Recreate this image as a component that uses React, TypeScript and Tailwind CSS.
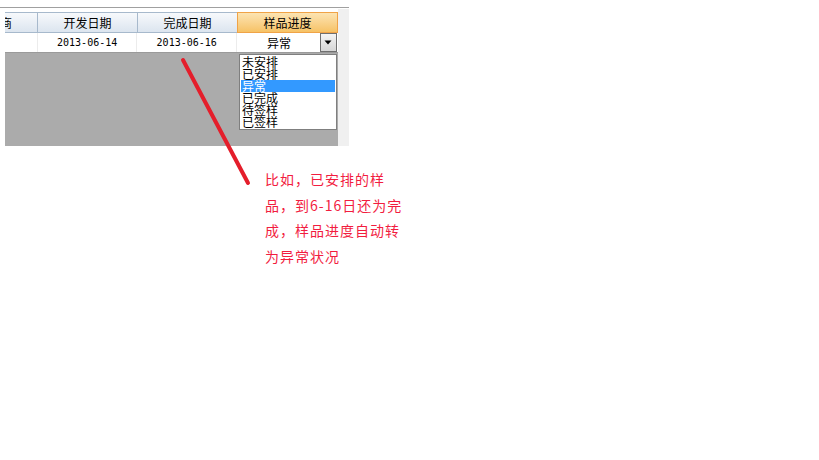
import React from "react";

const cjk = "font-['Noto_Sans_CJK_SC',sans-serif]";
const mono = "font-['DejaVu_Sans_Mono','Noto_Sans_CJK_SC',monospace]";

const options = ["未安排", "已安排", "异常", "已完成", "待签样", "已签样"];

function HeaderCell({ label, className = "" }: { label: string; className?: string }) {
  return (
    <div
      className={`flex items-center justify-center text-[12px] text-black bg-gradient-to-b from-[#f7f9fc] to-[#dce5ef] ${className}`}
    >
      {label}
    </div>
  );
}

function StatusSelect() {
  return (
    <div className="flex items-center w-[101px] h-full">
      <span className="flex-1 text-center text-[12px] text-black pl-[1px]">异常</span>
      <div className="w-[17px] h-[19px] mr-[1px] border border-[#6f6f6f] bg-gradient-to-b from-[#f4f4f4] to-[#d6d6d6] flex items-center justify-center">
        <svg width="8" height="5" viewBox="0 0 8 5">
          <path d="M0.5 0.5 L7.5 0.5 L4 4.5 Z" fill="#000" />
        </svg>
      </div>
    </div>
  );
}

function OptionList() {
  return (
    <div className="absolute left-[234px] top-[1px] w-[98px] h-[76px] bg-white border border-[#7f7f7f] pt-[1px] px-px">
      {options.map((opt) => (
        <div
          key={opt}
          className={`h-[12px] leading-[12px] text-[12px] pl-[1px] ${
            opt === "异常" ? "bg-[#3399ff] text-white" : "text-black"
          }`}
        >
          {opt}
        </div>
      ))}
    </div>
  );
}

export default function App() {
  return (
    <div className={`relative w-[819px] h-[460px] bg-white overflow-hidden ${cjk}`}>
      <div className="pt-[7px]">
        <div className="w-[349px] h-px bg-[#a0a0a0]" />
        <div className="flex w-[349px] h-[138px]">
          <div className="w-[5px]" />
          <div className="w-[333px] flex flex-col pt-[4px]">
            {/* header */}
            <div className="flex h-[21px] border-t border-b border-[#a7b9cc]">
              <div className="w-[32px] overflow-hidden flex items-center bg-gradient-to-b from-[#f7f9fc] to-[#dce5ef]">
                <span className="text-[12px] text-black ml-[-5px]">商</span>
              </div>
              <HeaderCell label="开发日期" className="w-[100px] border-l border-[#a7b9cc]" />
              <HeaderCell label="完成日期" className="w-[100px] border-l border-[#a7b9cc]" />
              <div className="w-[101px] -mt-px -mb-px flex items-center justify-center text-[12px] text-black bg-gradient-to-b from-[#fce4b2] to-[#f6c265] border border-[#f0a347]">
                样品进度
              </div>
            </div>
            {/* data row */}
            <div className="flex h-[20px] bg-white border-b border-[#9a9a9a]">
              <div className="w-[32px]" />
              <div className={`w-[100px] border-l border-[#ececec] flex items-center justify-center text-[10px] text-black ${mono}`}>
                2013-06-14
              </div>
              <div className={`w-[100px] border-l border-[#ececec] flex items-center justify-center text-[10px] text-black ${mono}`}>
                2013-06-16
              </div>
              <div className="border-l border-[#ececec]">
                <StatusSelect />
              </div>
            </div>
            {/* grey body */}
            <div className="relative flex-1 bg-[#ababab]">
              <OptionList />
            </div>
          </div>
          <div className="w-[11px] mt-px bg-[#f0f0f0]" />
        </div>
      </div>

      <div className="mt-[21px] ml-[265px] text-[14px] leading-[25.5px] tracking-[1px] text-[#f21d3f]">
        <div>比如，已安排的样</div>
        <div>品，到6-16日还为完</div>
        <div>成，样品进度自动转</div>
        <div>为异常状况</div>
      </div>

      <svg
        className="absolute left-0 top-0 pointer-events-none"
        width="819"
        height="460"
        viewBox="0 0 819 460"
      >
        <line x1="183" y1="60" x2="248" y2="183" stroke="#e41e2b" strokeWidth="4" strokeLinecap="round" />
      </svg>
    </div>
  );
}
